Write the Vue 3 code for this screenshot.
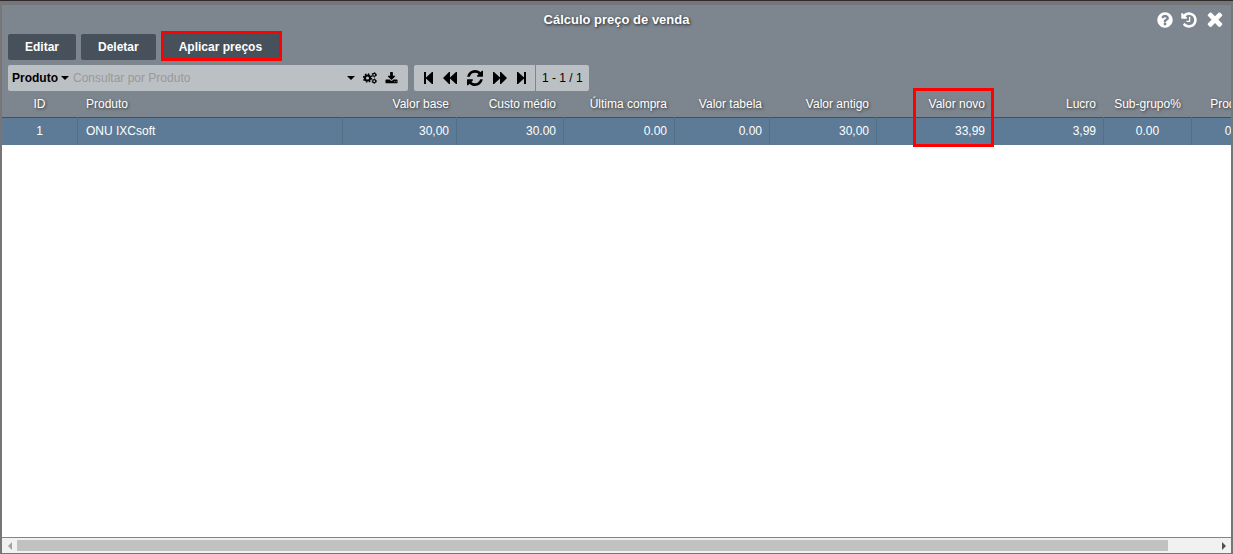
<script setup>
import { ref } from 'vue'

const field = ref('Produto')
const query = ref('')

const columns = [
  { label: 'ID', value: '1', width: 76, align: 'center' },
  { label: 'Produto', value: 'ONU IXCsoft', width: 265, align: 'left' },
  { label: 'Valor base', value: '30,00', width: 114, align: 'right' },
  { label: 'Custo médio', value: '30.00', width: 107, align: 'right' },
  { label: 'Última compra', value: '0.00', width: 111, align: 'right' },
  { label: 'Valor tabela', value: '0.00', width: 95, align: 'right' },
  { label: 'Valor antigo', value: '30,00', width: 107, align: 'right' },
  { label: 'Valor novo', value: '33,99', width: 116, align: 'right', marked: true },
  { label: 'Lucro', value: '3,99', width: 111, align: 'right' },
  { label: 'Sub-grupo%', value: '0.00', width: 88, align: 'center' },
  { label: 'Produto%', value: '0.00', width: 90, align: 'center' }
]
</script>

<template>
  <main class="window">
    <header class="titlebar">
      <h1>Cálculo preço de venda</h1>
      <div class="window-actions">
        <button type="button" aria-label="Ajuda">
          <svg width="18" height="18" viewBox="0 0 1792 1792"><path d="M1024 1376v-192q0-14-9-23t-23-9h-192q-14 0-23 9t-9 23v192q0 14 9 23t23 9h192q14 0 23-9t9-23zm256-672q0-88-55.5-163t-138.5-116-170-41q-243 0-371 213-15 24 8 42l132 100q7 6 19 6 16 0 25-12 53-68 86-92 34-24 86-24 48 0 85.5 26t37.5 59q0 38-20 61t-68 45q-63 28-115.5 86.5t-52.5 125.5v36q0 14 9 23t23 9h192q14 0 23-9t9-23q0-19 21.5-49.5t54.5-49.5q32-18 49-28.5t46-35 44.5-48 28-60.5 12.5-81zm384 192q0 209-103 385.5t-279.5 279.5-385.5 103-385.5-103-279.5-279.5-103-385.5 103-385.5 279.5-279.5 385.5-103 385.5 103 279.5 279.5 103 385.5z" /></svg>
        </button>
        <button type="button" aria-label="Histórico">
          <svg width="18" height="18" viewBox="0 0 1792 1792"><path d="M1664 896q0 156-61 298t-164 245-245 164-298 61q-172 0-327-72.5t-264-204.5q-7-10-6.5-22.5t8.5-20.5l137-138q10-9 25-9 16 2 23 12 73 95 179 147t225 52q104 0 198.5-40.5t163.5-109.5 109.5-163.5 40.5-198.5-40.5-198.5-109.5-163.5-163.5-109.5-198.5-40.5q-98 0-188 35.5t-160 101.5l137 138q31 30 14 69-17 40-59 40h-448q-26 0-45-19t-19-45v-448q0-42 40-59 39-17 69 14l130 129q107-101 244.5-156.5t284.5-55.5q156 0 298 61t245 164 164 245 61 298zm-640-288v448q0 14-9 23t-23 9h-320q-14 0-23-9t-9-23v-64q0-14 9-23t23-9h224v-352q0-14 9-23t23-9h64q14 0 23 9t9 23z" /></svg>
        </button>
        <button type="button" aria-label="Fechar">
          <svg width="22" height="22" viewBox="0 0 1792 1792"><path d="M1490 1322q0 40-28 68l-136 136q-28 28-68 28t-68-28l-294-294-294 294q-28 28-68 28t-68-28l-136-136q-28-28-28-68t28-68l294-294-294-294q-28-28-28-68t28-68l136-136q28-28 68-28t68 28l294 294 294-294q28-28 68-28t68 28l136 136q28 28 28 68t-28 68l-294 294 294 294q28 28 28 68z" transform="translate(0 -90)" /></svg>
        </button>
      </div>
    </header>

    <div class="actions">
      <button type="button">Editar</button>
      <button type="button">Deletar</button>
      <button type="button" class="marked">Aplicar preços</button>
    </div>

    <div class="tools">
      <div class="search">
        <label class="field">
          <select v-model="field" aria-label="Campo de consulta">
            <option>Produto</option>
          </select>
          <svg width="8" height="4" viewBox="0 0 8 4"><path d="M0 0h8L4 4z" /></svg>
        </label>
        <input v-model="query" type="text" placeholder="Consultar por Produto" aria-label="Consultar por Produto">
        <button type="button" aria-label="Opções">
          <svg width="8" height="4" viewBox="0 0 8 4"><path d="M0 0h8L4 4z" /></svg>
        </button>
        <button type="button" aria-label="Configurações">
          <svg class="cogs" width="14" height="12" viewBox="0 0 14 12">
            <circle cx="4.5" cy="6" r="2.6" stroke-width="2" />
            <circle cx="4.5" cy="6" r="4" stroke-width="1.4" stroke-dasharray="1.57 1.57" />
            <circle cx="11.2" cy="2.8" r="1.5" stroke-width="1.2" />
            <circle cx="11.2" cy="2.8" r="2.3" stroke-width=".8" stroke-dasharray="1.2 1.2" />
            <circle cx="11.2" cy="9.2" r="1.5" stroke-width="1.2" />
            <circle cx="11.2" cy="9.2" r="2.3" stroke-width=".8" stroke-dasharray="1.2 1.2" />
          </svg>
        </button>
        <button type="button" aria-label="Exportar">
          <svg width="13" height="13" viewBox="0 0 1792 1792"><path d="M1344 1344q0-26-19-45t-45-19-45 19-19 45 19 45 45 19 45-19 19-45zm256 0q0-26-19-45t-45-19-45 19-19 45 19 45 45 19 45-19 19-45zm128-224v320q0 40-28 68t-68 28h-1472q-40 0-68-28t-28-68v-320q0-40 28-68t68-28h465l135 136q58 56 136 56t136-56l136-136h464q40 0 68 28t28 68zm-325-569q17 41-14 70l-448 448q-18 19-45 19t-45-19l-448-448q-31-29-14-70 17-39 59-39h256v-448q0-26 19-45t45-19h256q26 0 45 19t19 45v448h256q42 0 59 39z" /></svg>
        </button>
      </div>

      <nav class="pager" aria-label="Paginação">
        <div class="pager-buttons">
          <button type="button" aria-label="Primeira página">
            <svg width="9" height="12" viewBox="0 0 9 12"><path d="M0 0h2v5.500L8 0h1v12H8L2 6.500V12H0z" /></svg>
          </button>
          <button type="button" aria-label="Página anterior">
            <svg width="14" height="12" viewBox="0 0 14 12"><path d="M7 0v5.500L13 0h1v12h-1L7 6.500V12H6L0 6l6-6z" /></svg>
          </button>
          <button type="button" aria-label="Atualizar">
            <svg width="16" height="16" viewBox="128 128 1536 1536"><path d="M1639 1056q0 5-1 7-64 268-268 434.500t-478 166.500q-146 0-282.500-55t-243.500-157l-129 129q-19 19-45 19t-45-19-19-45v-448q0-26 19-45t45-19h448q26 0 45 19t19 45-19 45l-137 137q71 66 161 102t187 36q134 0 250-65t186-179q11-17 53-117 8-23 30-23h192q13 0 22.500 9.500t9.500 22.500zm25-800v448q0 26-19 45t-45 19h-448q-26 0-45-19t-19-45 19-45l138-138q-148-137-349-137-134 0-250 65t-186 179q-11 17-53 117-8 23-30 23h-199q-13 0-22.500-9.500t-9.500-22.500v-7q65-268 270-434.500t480-166.500q146 0 284 55.500t245 156.500l130-129q19-19 45-19t45 19 19 45z" /></svg>
          </button>
          <button type="button" aria-label="Próxima página">
            <svg width="14" height="12" viewBox="0 0 14 12"><path d="M7 0v5.500L1 0H0v12h1l6-5.500V12h1l6-6-6-6z" /></svg>
          </button>
          <button type="button" aria-label="Última página">
            <svg width="9" height="12" viewBox="0 0 9 12"><path d="M9 0H7v5.500L1 0H0v12h1l6-5.500V12h2z" /></svg>
          </button>
        </div>
        <span class="count">1 - 1 / 1</span>
      </nav>
    </div>

    <div class="grid">
      <table>
        <colgroup>
          <col v-for="c in columns" :key="c.label" :style="{ width: c.width + 'px' }">
        </colgroup>
        <thead>
          <tr>
            <th v-for="c in columns" :key="c.label" scope="col" :class="[c.align, { marked: c.marked }]">{{ c.label }}</th>
          </tr>
        </thead>
        <tbody>
          <tr>
            <td v-for="c in columns" :key="c.label" :class="c.align">{{ c.value }}</td>
          </tr>
        </tbody>
      </table>
    </div>

    <div class="scrollbar">
      <button type="button" class="previous" aria-label="Rolar para a esquerda">
        <svg width="4" height="8" viewBox="0 0 4 8"><path d="M4 0v8L0 4z" /></svg>
      </button>
      <div class="track"><div class="thumb"></div></div>
      <button type="button" aria-label="Rolar para a direita">
        <svg width="4" height="8" viewBox="0 0 4 8"><path d="M0 0v8l4-4z" /></svg>
      </button>
    </div>
  </main>
</template>

<style>
body {
  background: #777575;
}
</style>

<style scoped>
* {
  box-sizing: border-box;
}

.window {
  display: flex;
  flex-direction: column;
  min-height: 100vh;
  padding: 4px 2px 1px;
  border-top: 1px solid #2b2b30;
  background: #777575;
  color: #fff;
  font: 12px/16px "Liberation Sans", Arial, sans-serif;
}

button,
input,
select {
  margin: 0;
  padding: 0;
  border: 0;
  background: none;
  color: inherit;
  font: inherit;
}

svg {
  display: block;
  fill: currentColor;
}

.titlebar {
  display: grid;
  grid-template-columns: 1fr auto 1fr;
  align-items: center;
  height: 29px;
  background: #7d868f;
}

h1 {
  grid-column: 2;
  margin: 0;
  font-size: 13px;
  line-height: 16px;
  text-shadow: 1px 1px 3px #222;
}

.window-actions {
  display: flex;
  justify-content: flex-end;
  align-items: center;
  gap: 6px;
  padding-right: 5px;
}

.actions {
  display: flex;
  gap: 5px;
  padding: 0 6px 5px;
  background: #7d868f;
}

.actions button {
  height: 26px;
  padding: 0 17px;
  border-radius: 2px;
  background: #46515b;
  font-weight: bold;
}

.actions .marked {
  padding: 0 18px;
}

.marked {
  position: relative;
}

.marked::after {
  content: "";
  position: absolute;
  z-index: 1;
  inset: -3px -2px -1px 0;
  border: 3px solid #f00;
  pointer-events: none;
}

.tools {
  display: flex;
  gap: 6px;
  padding: 0 6px;
  background: #7d868f;
  color: #000;
}

.search,
.pager {
  display: flex;
  align-items: center;
  height: 26px;
  border-radius: 2px;
  background: #bbc0c4;
}

.search {
  gap: 8px;
  width: 400px;
  padding: 0 10px 0 4px;
}

.field {
  display: flex;
  align-items: center;
  gap: 3px;
}

.field select {
  appearance: none;
  font-weight: bold;
}

.search input {
  flex: 1;
  min-width: 0;
  margin-left: -4px;
}

.search input::placeholder {
  color: #999;
  opacity: 1;
}

.cogs {
  fill: none;
  stroke: currentColor;
}

.pager-buttons {
  display: flex;
  align-items: center;
  gap: 10px;
  height: 26px;
  padding: 0 9px 0 10px;
  border-right: 1px solid #7d868f;
}

.count {
  padding: 0 6px;
}

.grid {
  flex: 1;
  overflow-x: clip;
  background: #fff;
}

table {
  width: 1280px;
  table-layout: fixed;
  border-collapse: separate;
  border-spacing: 0;
}

th,
td {
  height: 27px;
  padding: 0 7px 0 8px;
  border-right: 1px solid transparent;
  text-align: left;
}

th {
  border-bottom: 1px solid #464f59;
  background: #7d868f;
  font-weight: normal;
  text-shadow: 1px 1px 3px #333;
}

td {
  padding-bottom: 1px;
  border-right-color: #537089;
  background: #5d7b96;
}

th.center {
  padding: 0;
  text-align: center;
}

td.center {
  padding: 0 0 1px;
  text-align: center;
}

.right {
  text-align: right;
}

th.marked::after {
  inset: -3px -2px -30px 36px;
}

.scrollbar {
  display: flex;
  height: 16px;
  border-top: 1px solid #7d868f;
  background: #f1f1f1;
  color: #505050;
}

.scrollbar button {
  display: grid;
  place-items: center;
  width: 15px;
}

.scrollbar .previous {
  color: #a3a3a3;
}

.track {
  flex: 1;
  padding: 2px 0;
}

.thumb {
  width: 96%;
  height: 11px;
  background: #c1c1c1;
}
</style>
